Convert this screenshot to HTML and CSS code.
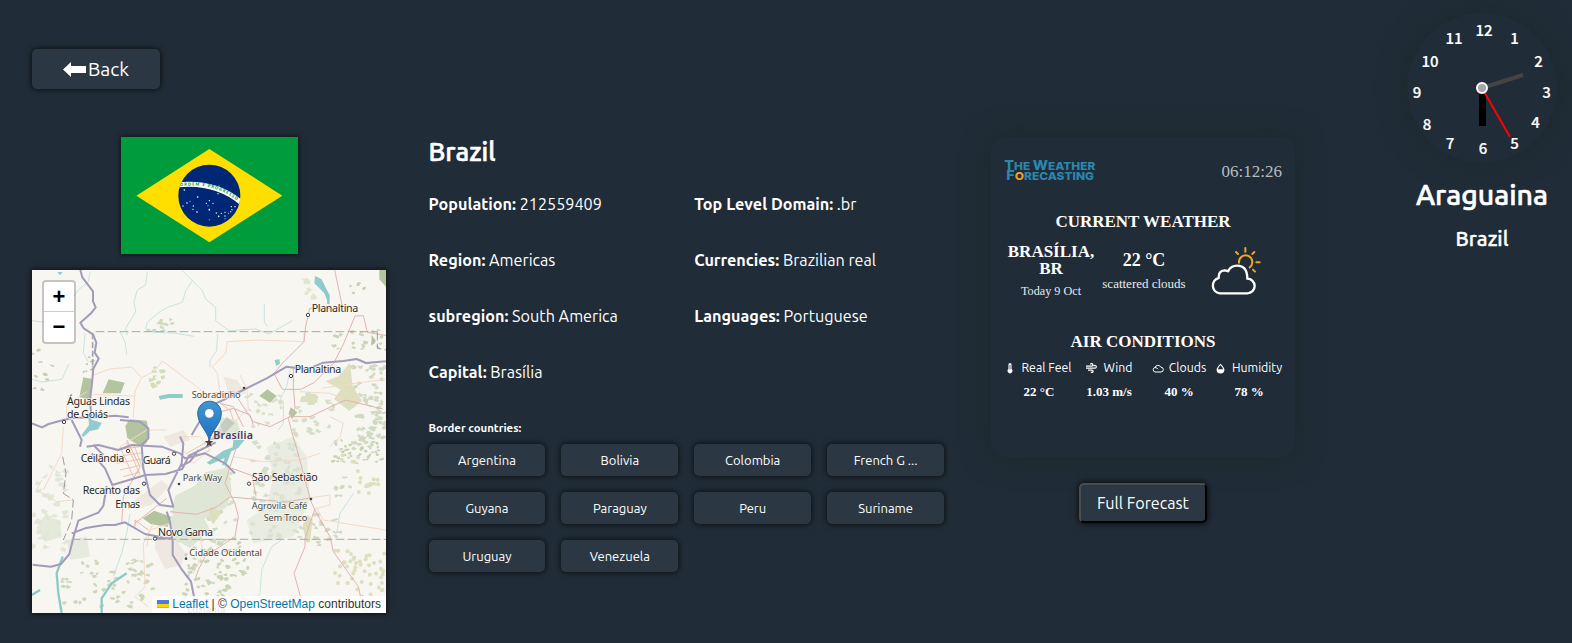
FILE: index.html
```html
<!DOCTYPE html>
<html lang="en">
<head>
<meta charset="utf-8">
<title>Brazil</title>
<link rel="stylesheet" href="styles.css">
</head>
<body>
<div class="page">
  <main class="content">
    <header class="topbar">
      <button class="btn back"><svg class="arrow" viewBox="0 0 23 15"><path d="M0 7.500 8 0v4h15v7H8v4z" fill="#fff"/></svg><span>Back</span></button>
    </header>
    <div class="columns">
      <section class="media">
        <svg class="flag" viewBox="0 0 531 351">
          <rect width="531" height="351" fill="#009b3a"/>
          <path d="M46 176 265 36l219 140-219 140z" fill="#fedf00"/>
          <clipPath id="globe"><circle cx="265" cy="176" r="93"/></clipPath>
          <circle cx="265" cy="176" r="93" fill="#002776"/>
          <g clip-path="url(#globe)">
            <path d="M165 144Q290 130 370 205" fill="none" stroke="#fff" stroke-width="15"/>
            <path id="motto" d="M177 148Q290 134 362 203" fill="none"/>
            <text class="motto"><textPath href="#motto" textLength="180">ORDEM E PROGRESSO</textPath></text>
          </g>
          <g fill="#fff"><circle cx="190" cy="159" r="2.5"/><circle cx="230" cy="180" r="2.5"/><circle cx="198" cy="198" r="2.5"/><circle cx="186" cy="207" r="2"/><circle cx="207" cy="193" r="1.5"/><circle cx="217" cy="207" r="2"/><circle cx="216" cy="217" r="2"/><circle cx="228" cy="225" r="2.5"/><circle cx="265" cy="191" r="2"/><circle cx="256" cy="199" r="2"/><circle cx="276" cy="199" r="2"/><circle cx="265" cy="218" r="2.5"/><circle cx="261" cy="206" r="1.5"/><circle cx="265" cy="248" r="1.5"/><circle cx="286" cy="228" r="2"/><circle cx="293" cy="238" r="2.5"/><circle cx="301" cy="229" r="2"/><circle cx="312" cy="226" r="2"/><circle cx="312" cy="237" r="2"/><circle cx="312" cy="245" r="1.5"/><circle cx="322" cy="229" r="1.5"/><circle cx="329" cy="224" r="2"/><circle cx="331" cy="209" r="2"/><circle cx="333" cy="218" r="2"/><circle cx="342" cy="209" r="2"/><circle cx="291" cy="170" r="2"/><circle cx="294" cy="147" r="1.5"/></g>
        </svg>
        <div class="map">
          <svg class="tiles" viewBox="36 30 1062 1029" preserveAspectRatio="none">
            <rect x="36" y="30" width="1062" height="1029" fill="#f7f6f1"/>
            <g id="scatter"></g>
            <g fill="#dfe6d6">
              <path d="M625 622l10 70-15 50-80 40-60 30-25-55 10-50 60-30 30-40z"/>
              <path d="M740 560l80-30 40 60 10 130-50 110-120 20-20-70 60-40 20-90z" opacity=".6"/>
              <path d="M450 770l90-20 30 60-60 55-50-30z"/>
              <path d="M70 770l50 10 5 50-50 15-25-40z" opacity=".8"/>
              <path d="M140 840l60-10 10 60-60 10z" opacity=".7"/>
              <path d="M590 470l60 10 20 60-50 0z"/>
            </g>
            <g fill="#b3c49f">
              <path d="M190 352l28 5-8 62-32-8zM266 358l48 10-12 32-54 0zM330 478l50 4 8 40-8 26-18 12-40-26-6-36zM742 388l28 20-20 20-32-20zM368 775l35-23 50 18-10 30-50-7zM1078 30h20v50l-20-22zM812 442l20 15-16 20-10-16zM1055 225l13 18-14 15z"/>
            </g>
            <g fill="#dedfbf"><path d="M990 308l8 70 28 45-38 30-46-36 20-28-45-25 38-15zM845 408l50 0-4 20-52-2zM570 738l35 20-25 35-15-20zM848 795l14-30 16 12-8 70-12 0z"/></g>
            <g fill="#eee8e0"><path d="M345 720l80-60 20 20-50 55-50 10zM405 840l50-20 40 60-10 35-50 12-30-60zM430 530l60-20 20 30-60 20zM610 350l40 10 30 40-50 10z"/></g>
            <g fill="#8fcccb">
              <path d="M416 408l30-6 42 0 0 12-40 0-28 5zM885 48l20 10 12 25 12 22-2 30-14-35-30-30zM764 300l14-2 2 14-12 5zM205 470l12 10 28 8-10 20-25 5-20 18-5-6 22-30zM640 540l34 0-20 24-20 10-16 42-12 0 8-22-44 20-10-6 50-36 28-10zM112 36l16 0-8 10z"/>
            </g>
            <g fill="none" stroke="#c7e4e0" stroke-width="3" stroke-linejoin="round">
              <path d="M210 35l-5 30-30 25-15 22M382 35l-5 40-25 15-10 35 5 30-15 25-15 25 5 20M487 32l30 30-20 30-10 35-45 15-25 15-35 30-5 20 25 10 60 2 60 10M517 62l30 30 10 25 30 25 0 40 40 30 80-5 40 15 70-40M733 132v55l10 12M593 222l-3 50-20 30 0 20M36 182l60 8M36 358l30 8 60-8 20-45M300 215l15 30 5 38M780 420l20-40 10-50M790 430l0 60-15 20M195 220l-5 60 15 25M330 760l-10 60-15 60-25 70M785 840l-30 20-30 70-5 70-20 30M1000 700l-40 60-10 60"/>
            </g>
            <g fill="none" stroke="#8ccac8" stroke-width="7"><path d="M128 890l-18 50 5 60 10 59M320 940l-45 30-30 45 0 44M905 70l20 40 0 22M60 990l-24 15"/></g>
            <g fill="none" stroke="#f4dac8" stroke-width="3" stroke-linejoin="round">
              <path d="M220 345l50-18 65-6 30 32 40-20 22-30 120 90 45 45M365 353l-20 40-5 80M220 403l120 5M600 400l-8-60-15-20 40-40 5-35 90-5 140 5 0-30M140 475l0-40 60-40M65 660l-15 30 60 35 50-5M130 500l-5 80-55 110M400 790l-30 60 5 130-30 30 40 30M450 790l-60 20-10 50M520 940l30-60-15-70M640 590l90 15 110-5 60-20M860 715l70-10 0 30-40 10 20 35 188 30M905 385l100-15 90-12M660 345l20 40 5 60-40 40M840 395l90 5 50 20M930 470l40 20-10 40-30 30M300 560l80-50 60 0M480 530l60 0 30 40-50 40-30-40z"/>
              <path d="M280 570l80-10M285 590l85-12M290 610l80-14M300 630l60-14M310 650l50-14M300 560l40 90M320 550l40 95M340 550l30 80M500 580l80-45M505 590l80-40M510 600l60-30M600 430l30 20 10 30" stroke="#efc5ac"/>
            </g>
            <g fill="none" stroke="#e2b3b0" stroke-width="3" stroke-linejoin="round">
              <path d="M944 30l22 105-22 10-75 0-12 55-5 45-65 65-25 30 25 48 55 0 40-20 60-60 28-55 35-85 25-1 12 50 60 10 20 20M820 320l0 60 5 65-20 30 10 40 15 50 43 160 17 35 40 70 10 45 75 105 14 65 30 35M885 745l-30 90 0 25-33 80 25 90M650 560l-20 60-15 50 30 60 10 40-10 60-90 60-20 40-10 30M580 400l60-5 60 90 50 15 60-30 60 0 106-50 112 27M450 755l80 8 60-22 40-30 170 15 70-12M636 625l60 22 12 60M320 540l40 80-50 90-5 80M585 460l55-15 50 20 10 30M345 790l95-75M345 800l0-20 40 30M600 430l40 10 30 60"/>
            </g>
            <g fill="none" stroke="#a29bbb" stroke-width="6" stroke-linejoin="round">
              <path d="M181 30l6 22 32 42v30l8 18-14 18-32 28 10 17 28 18 10 25-5 30 12 18-16 30-4 44-6 50 4 50M36 490l30 12 20-10 30-8 40-10 70-2 60-5 40 5M155 480l30 60-5 20M300 480l60 5 25 20 0 30-20 20 5 70 20 80 30 30 40 5-15-50 40-80 5-60-10-20M1098 304l-60 5-28-12-40 6-60 5-50 20-60-8-60 35-130 65-45 20-50 85M200 560l35-5 60 15 40-15 90 5 55 20 15 15 60-15 60 30 30 30M220 555l30 30M260 678l-10 60-15 20-60 24-12 40-15 60-25 30-30 8-55-6M155 820l40-15 25-5 35-5 30 0 30-8 60 35 50 10 12 5M215 580l40 45 22 50 100-30 60-3 50-15 20-40 80-40M440 755l10 30 8 60 0 40 25 40 30 40 10 50M405 835l50 0M480 620l30-15 25-35"/>
            </g>
            <g fill="none" stroke="#aaa" stroke-width="3" stroke-dasharray="26 10"><path d="M227 215h845M155 838h943"/><path d="M1072 215l0 50 26 5M128 590l10 50-8 60 30 20-5 60-25 60" stroke="#a096a0"/></g>
            <g fill="none" stroke="#a9a1ac" stroke-width="5" stroke-dasharray="18 8"><path d="M218 220v120"/></g>
            <g class="stop"><circle cx="864" cy="165" r="5"/><circle cx="813" cy="348" r="5"/><circle cx="132" cy="486" r="5"/><circle cx="324" cy="573" r="5"/><circle cx="462" cy="581" r="5"/><circle cx="372" cy="671" r="5"/><circle cx="687" cy="671" r="5"/><circle cx="405" cy="836" r="5"/></g>
            <g fill="#444"><circle cx="672" cy="384" r="4"/><circle cx="477" cy="672" r="4"/><circle cx="873" cy="717" r="4"/><circle cx="498" cy="896" r="4"/><path d="M567 534l3 9h10l-8 7 3 10-8-6-8 6 3-10-8-7h10z"/></g>
            <g class="place">
              <text x="875" y="156" textLength="140">Planaltina</text>
              <text x="824" y="338" textLength="140">Planaltina</text>
              <text x="141" y="436" textLength="189">Águas Lindas</text>
              <text x="141" y="475" textLength="123">de Goiás</text>
              <text x="182" y="606" textLength="131">Ceilândia</text>
              <text x="368" y="613" textLength="84">Guará</text>
              <text x="188" y="703" textLength="172">Recanto das</text>
              <text x="286" y="743" textLength="74">Emas</text>
              <text x="696" y="663" textLength="197">São Sebastião</text>
              <text x="414" y="828" textLength="165">Novo Gama</text>
            </g>
            <g class="place minor">
              <text x="515" y="413" textLength="147">Sobradinho</text>
              <text x="488" y="662" textLength="118">Park Way</text>
              <text x="695" y="746" textLength="167">Agrovila Café</text>
              <text x="731" y="782" textLength="131">Sem Troco</text>
              <text x="508" y="887" textLength="218">Cidade Ocidental</text>
              <text x="501" y="1059" textLength="115" opacity=".8">Luziânia</text>
            </g>
            <text class="place capital" x="580" y="537" textLength="119">Brasília</text>
            <defs><linearGradient id="pin" x1="0" y1="0" x2="0" y2="1"><stop offset="0" stop-color="#4296d2"/><stop offset="1" stop-color="#1c70c2"/></linearGradient></defs>
            <path d="M570 540l50-70 24 20-50 50z" fill="#555" opacity=".18"/>
            <path d="M568 541c-8-32-35-48-35-82a35.500 35.500 0 0 1 71 0c0 34-28 50-36 82z" fill="url(#pin)" stroke="#2e6c97" stroke-width="3"/>
            <circle cx="568" cy="460" r="13" fill="#fff"/>
          </svg>
          <div class="zoom"><span>+</span><span>−</span></div>
          <div class="credit"><svg class="ua" viewBox="0 0 12 8"><path fill="#4C7BE1" d="M0 0h12v4H0z"/><path fill="#FFD500" d="M0 4h12v3H0z"/><path fill="#E0BC00" d="M0 7h12v1H0z"/></svg> <a>Leaflet</a> | © <a>OpenStreetMap</a> contributors</div>
        </div>
      </section>

      <section class="details">
        <h1>Brazil</h1>
        <div class="facts">
          <p><b>Population:</b> 212559409</p><p><b>Top Level Domain:</b> .br</p>
          <p><b>Region:</b> Americas</p><p><b>Currencies:</b> Brazilian real</p>
          <p><b>subregion:</b> South America</p><p><b>Languages:</b> Portuguese</p>
          <p><b>Capital:</b> Brasília</p>
        </div>
        <h2>Border countries:</h2>
        <div class="borders">
          <button class="btn">Argentina</button><button class="btn">Bolivia</button><button class="btn">Colombia</button><button class="btn">French G ...</button>
          <button class="btn">Guyana</button><button class="btn">Paraguay</button><button class="btn">Peru</button><button class="btn">Suriname</button>
          <button class="btn">Uruguay</button><button class="btn">Venezuela</button>
        </div>
      </section>

      <section class="forecast">
        <div class="card">
          <div class="brand">
            <svg class="logo" viewBox="0 0 276 62">
              <g class="logotext"><text x="1" y="29" textLength="273" lengthAdjust="spacingAndGlyphs"><tspan class="cap">T</tspan>HE <tspan class="cap">W</tspan>EATHER</text>
              <text x="7" y="60" textLength="263" lengthAdjust="spacingAndGlyphs"><tspan class="cap">F</tspan><tspan class="sun">O</tspan>RECASTING</text></g>
            </svg>
            <span class="time">06:12:26</span>
          </div>
          <h3 class="head">CURRENT WEATHER</h3>
          <div class="now">
            <div class="city"><strong>BRASÍLIA, BR</strong><span>Today 9 Oct</span></div>
            <div class="temp"><strong>22 °C</strong><span>scattered clouds</span></div>
            <svg class="sky" viewBox="0 0 150 144" fill="none" stroke-linecap="round">
              <g stroke="#f0a422" stroke-width="6"><path d="M84 47a20 20 0 1 1 32 14M103 3v11M75 15l6 6M130 15l-6 6M136 46h10M126 68l6 6"/></g>
              <path d="M26 139a23.500 23.500 0 0 1-3-46q-1-22 17-23 7 0 11 3 9-17 27-17 31 0 31 39a22 22 0 0 1 0 44z" stroke="#fff" stroke-width="7" stroke-linejoin="round"/>
            </svg>
          </div>
          <h3 class="head air-head">AIR CONDITIONS</h3>
          <div class="air">
            <div><span class="label"><svg class="thermo" viewBox="0 0 8 12"><path d="M2.300 1.800a1.700 1.700 0 0 1 3.400 0v4.800a2.600 2.600 0 1 1-3.400 0z" fill="#fff"/><path d="M4 2v5" stroke="#202c37" stroke-width=".8"/></svg>Real Feel</span><strong>22 °C</strong></div>
            <div><span class="label"><svg class="wind" viewBox="0 0 11 10" fill="none" stroke="#fff" stroke-width="1.200"><path d="M0 3.200h5.500a1.300 1.300 0 1 0-1.200-1.700M0 5.200h9a1.400 1.400 0 1 0-1.300-2M2 7.200h4a1.100 1.100 0 1 1-1 1.600"/></svg>Wind</span><strong>1.03 m/s</strong></div>
            <div><span class="label"><svg class="cloud" viewBox="0 0 12 9" fill="none" stroke="#fff"><path d="M3 8a2.300 2.300 0 0 1 0-4.500A3.100 3.100 0 0 1 8.800 3.200 2.400 2.400 0 0 1 9 8zM3 3.500q2 0 2.800 1.600"/></svg>Clouds</span><strong>40 %</strong></div>
            <div><span class="label"><svg class="drop" viewBox="0 0 9 11"><path d="M4.500.8Q8.400 4.600 8.400 6.700a3.900 3.700 0 0 1-7.800 0Q.6 4.600 4.500.8z" fill="#fff"/><path d="M4.500 2.300Q7 4.600 7.200 6.200H1.800Q2 4.600 4.500 2.300z" fill="#202c37"/></svg>Humidity</span><strong>78 %</strong></div>
          </div>
        </div>
        <button class="full">Full Forecast</button>
      </section>
    </div>
  </main>

  <aside class="side">
    <svg class="clock" viewBox="0 0 150 150">
      <g class="hours"><text x="77" y="23">12</text><text x="107.500" y="31">1</text><text x="131.500" y="54">2</text><text x="139.500" y="84.500">3</text><text x="128.500" y="115">4</text><text x="107.500" y="136">5</text><text x="76" y="140.500">6</text><text x="43" y="136">7</text><text x="20" y="117">8</text><text x="10" y="85">9</text><text x="23" y="54">10</text><text x="47" y="31">11</text></g>
      <path d="M75 75v38" stroke="#000" stroke-width="7" transform="translate(.5 0)"/>
      <path d="M75 75 116 62" stroke="#444" stroke-width="4"/>
      <path d="M75 75 103 124" stroke="#f00" stroke-width="2"/>
      <circle cx="75" cy="75" r="5" fill="#a5a5a5" stroke="#fff" stroke-width="2"/>
    </svg>
    <div class="town">Araguaina</div>
    <div class="nation">Brazil</div>
  </aside>
</div>
<script src="map.js"></script>
</body>
</html>
```
FILE: styles.css
```css
* { box-sizing: border-box; }
body { margin: 0; background: #202c37; color: #fff; font-family: Ubuntu, "Noto Sans", sans-serif; overflow: hidden; }
h1, h2, h3, p { margin: 0; }
button { font: inherit; color: inherit; }
.page { display: flex; justify-content: space-between; height: 643px; }
.content { width: 1295px; padding: 49px 0 0 32px; }
.topbar { height: 88px; }
.btn { border: 0; border-radius: 5px; background: #2b3844; box-shadow: 0 0 5px 1px rgba(0,0,0,.6); padding: 0; }
.back { width: 128px; height: 40px; display: flex; align-items: center; justify-content: center; gap: 2px; font-size: 19.400px; }
.arrow { width: 23px; height: 15px; }
.columns { display: flex; }
.media { width: 354px; display: flex; flex-direction: column; align-items: center; gap: 16px; }
.flag { width: 177px; height: 117px; box-shadow: 0 0 5px 1px rgba(0,0,0,.5); }
.motto { font: bold 13px "Noto Sans", sans-serif; fill: #009b3a; }
.map { position: relative; width: 354px; height: 343px; box-shadow: 0 0 5px 1px rgba(0,0,0,.6); color: #333; }
.tiles { display: block; width: 354px; height: 343px; }
.stop { fill: #fff; stroke: #444; stroke-width: 3; }
.place { font: 32px "Noto Sans", sans-serif; fill: #2b2b2b; stroke: #f7f6f1; stroke-width: 4px; paint-order: stroke; stroke-linejoin: round; }
.minor { font-size: 28px; fill: #4a4a4a; }
.capital { font-weight: 600; font-size: 32px; fill: #45375a; }
.zoom { position: absolute; left: 10px; top: 10px; width: 34px; height: 64px; border: 2px solid rgba(0,0,0,.2); border-radius: 4px; background: #fff; background-clip: padding-box; display: grid; grid-template-rows: 29px 31px; color: #000; font: bold 22px/30px "Liberation Sans", sans-serif; text-align: center; }
.zoom span + span { border-top: 1px solid #ccc; }
.credit { position: absolute; right: 0; bottom: 0; height: 17px; padding: 0 5px; background: rgba(255,255,255,.8); font: 12px/16.800px "Liberation Sans", sans-serif; white-space: nowrap; }
.credit a { color: #0078a8; }
.ua { width: 12px; height: 8px; }
.details { width: 515.500px; margin-left: 42.500px; }
h1 { font-size: 26px; line-height: 30px; font-weight: 500; -webkit-text-stroke: .6px #fff; }
.facts { display: grid; grid-template-columns: 1fr 1fr; column-gap: 16px; grid-auto-rows: 56px; margin-top: 9px; font-size: 16.200px; line-height: 56px; }
.facts b { font-weight: 700; }
h2 { font-size: 11.400px; font-weight: 700; line-height: 30px; height: 44px; padding-top: 13px; }
.borders { display: grid; grid-template-columns: repeat(4, 1fr); grid-auto-rows: 32px; gap: 16px; font-size: 13px; }
.forecast { margin-left: 47px; width: 304px; display: flex; flex-direction: column; align-items: center; }
.card { width: 304px; height: 320px; border-radius: 16px; padding: 22px 13px 0; box-shadow: 0 0 24px 4px rgba(28,42,44,.75); font-family: "Liberation Serif", serif; text-align: center; }
.brand { display: flex; justify-content: space-between; align-items: flex-start; height: 53px; }
.logo { width: 92px; height: 21px; margin-top: 1px; overflow: visible; }
.logotext { font: 800 33px Inter, sans-serif; fill: #2a87ae; }
.cap { font-size: 40px; }
.sun { fill: #f0a020; }
.time { color: #b9bdc1; font-size: 17px; line-height: 25px; }
.head { font-size: 17px; line-height: 20px; }
.now { display: flex; height: 62px; margin-top: 11px; }
.city { width: 92px; display: flex; flex-direction: column; margin-left: 1px; }
.city strong { font-size: 17px; line-height: 17px; }
.city span { font-size: 12.200px; line-height: 14px; margin-top: 7px; color: #e9ebec; }
.temp { width: 94px; display: flex; flex-direction: column; }
.temp strong { font-size: 18px; line-height: 20px; margin-top: 7px; }
.temp span { font-size: 13px; line-height: 16px; margin-top: 6px; white-space: nowrap; color: #e9ebec; }
.sky { width: 50px; height: 48px; margin: 4px 0 0 20px; }
.air-head { margin-top: 27px; }
.air { display: grid; grid-template-columns: repeat(4, 70px); margin: 7px -2px 0 0; }
.air div { display: flex; flex-direction: column; align-items: center; gap: 7px; }
.label { display: flex; align-items: center; gap: 7px; font: 12.300px/18px Ubuntu, "Noto Sans", sans-serif; white-space: nowrap; }
.air strong { font-size: 13px; line-height: 15px; }
.thermo { width: 8px; height: 11px; }
.wind { width: 11px; height: 10px; }
.cloud { width: 12px; height: 9px; margin-right: -2px; }
.drop { width: 9px; height: 11px; }
.full { width: 128px; height: 40px; margin-top: 26px; border: 2px outset #000; border-radius: 5px; background: #2b3844; box-shadow: 0 0 6px 1px rgba(0,0,0,.65); font-size: 16.200px; padding: 0; white-space: nowrap; border-color: #4c4c4c #000 #000 #4c4c4c; }
.side { width: 180px; padding-top: 13px; display: flex; flex-direction: column; align-items: center; }
.clock { width: 150px; height: 150px; border-radius: 50%; box-shadow: 0 0 24px 4px rgba(28,42,44,.75); }
.hours { font: 500 15px "Noto Sans CJK JP", sans-serif; fill: #fff; stroke: #fff; stroke-width: .2px; text-anchor: middle; }
.town { font-size: 28.500px; line-height: 36px; margin-top: 13px; font-weight: 500; -webkit-text-stroke: .6px #fff; }
.nation { font-size: 20.500px; line-height: 24px; margin-top: 15px; font-weight: 500; -webkit-text-stroke: .4px #fff; }
```
FILE: map.js
```js
// Scatters vegetation and farmland patches over the map background.
(function () {
  var seed = 7;
  function rnd() { seed = (seed * 16807) % 2147483647; return seed / 2147483647; }
  var zones = [
    // x, y, width, height, count, size, colour
    [385, 175, 75, 40, 10, 8, '#cfdabd'],
    [825, 60, 60, 60, 7, 10, '#e3e6cf'],
    [990, 60, 60, 60, 5, 6, '#c3d0ae'],
    [930, 210, 160, 60, 22, 7, '#c9d5b8'],
    [1000, 310, 98, 260, 75, 9, '#d0dac0'],
    [930, 540, 160, 70, 45, 6, '#c6d2b2'],
    [690, 540, 160, 300, 70, 10, '#d3decb'],
    [880, 760, 80, 120, 22, 8, '#d0dac0'],
    [490, 830, 200, 200, 75, 8, '#c9d5b6'],
    [120, 900, 280, 140, 60, 8, '#cdd8bb'],
    [36, 620, 110, 250, 30, 12, '#e1e8d8'],
    [380, 320, 60, 60, 12, 9, '#d3deb9'],
    [680, 400, 110, 100, 18, 8, '#d8e1cc'],
    [820, 400, 120, 130, 30, 9, '#d6dfc7'],
    [190, 290, 30, 50, 8, 5, '#b8c8a4'],
    [36, 240, 60, 170, 9, 7, '#c3d0ae'],
    [470, 740, 130, 110, 20, 10, '#d0dbc4'],
    [590, 620, 60, 200, 14, 8, '#d5dfca'],
    [930, 640, 60, 80, 10, 8, '#d0dac0']
  ];
  var html = '';
  zones.forEach(function (z) {
    for (var i = 0; i < z[4]; i++) {
      var x = z[0] + rnd() * z[2], y = z[1] + rnd() * z[3], pts = [];
      for (var a = 0; a < 7; a++) {
        var r = z[5] * (0.35 + rnd());
        pts.push((x + Math.cos(a * 0.9) * r).toFixed(1) + ',' + (y + Math.sin(a * 0.9) * r * 0.7).toFixed(1));
      }
      html += '<polygon points="' + pts.join(' ') + '" fill="' + z[6] + '"/>';
    }
  });
  [[1010, 630, 70, 70, 14], [940, 860, 60, 110, 16], [1000, 880, 98, 130, 30], [960, 580, 60, 40, 5], [790, 980, 30, 60, 5]].forEach(function (z) {
    for (var i = 0; i < z[4]; i++) {
      html += '<circle cx="' + (z[0] + rnd() * z[2]).toFixed(1) + '" cy="' + (z[1] + rnd() * z[3]).toFixed(1) + '" r="6" fill="#dedfbf"/>';
    }
  });
  document.getElementById('scatter').innerHTML = html;
})();
```
